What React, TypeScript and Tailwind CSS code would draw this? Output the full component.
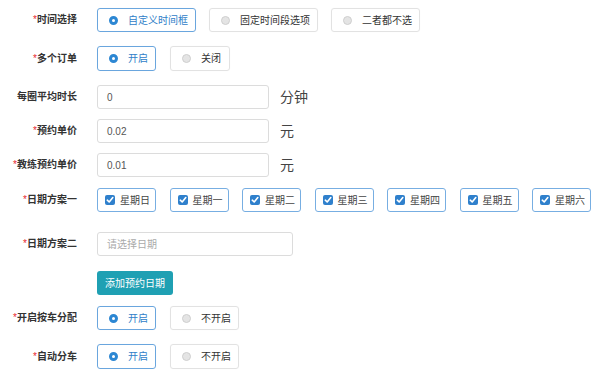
import React from "react";

const FONT = "font-['Liberation_Sans','Noto_Sans_CJK_SC',sans-serif]";

function Label({ text, req = true }: { text: string; req?: boolean }) {
  return (
    <div className="w-[77px] shrink-0 text-right text-[10px] font-bold text-[#333] leading-none whitespace-nowrap">
      {req && <span className="text-[#e8262e] font-normal">*</span>}
      {text}
    </div>
  );
}

function Radio({ label, checked, w }: { label: string; checked?: boolean; w: string }) {
  return (
    <div
      className={`${w} h-full flex items-center pl-[11px] rounded-[3px] border ${
        checked ? "border-[#6aa6de] text-[#2f80c8]" : "border-[#e2e2e2] text-[#333]"
      } text-[10px] whitespace-nowrap shadow-[0_0_1px_rgba(0,0,0,0.05)]`}
    >
      {checked ? (
        <span className="w-[9px] h-[9px] rounded-full border-[3px] border-[#2d87d3] bg-white shrink-0" />
      ) : (
        <span className="w-[9px] h-[9px] rounded-full border border-[#cfcfcf] bg-[#e4e4e4] shrink-0" />
      )}
      <span className="ml-[10px]">{label}</span>
    </div>
  );
}

function Check({ label }: { label: string }) {
  return (
    <div className="w-[59px] h-full flex items-center pl-[7px] rounded-[3px] border border-[#77aee2] text-[10px] text-[#444] whitespace-nowrap">
      <span className="w-[10px] h-[10px] rounded-[2px] bg-[#2f80cc] flex items-center justify-center shrink-0">
        <svg width="8" height="8" viewBox="0 0 8 8">
          <path d="M1.3 4.2 L3.2 6 L6.8 1.6" stroke="white" strokeWidth="1.6" fill="none" strokeLinecap="round" strokeLinejoin="round" />
        </svg>
      </span>
      <span className="ml-[5px]">{label}</span>
    </div>
  );
}

function Input({ value, placeholder, w }: { value?: string; placeholder?: string; w: string }) {
  return (
    <div className={`${w} h-full flex items-center pl-[9px] rounded-[3px] border border-[#dcdcdc] text-[10px] ${value ? "text-[#555]" : "text-[#aaa]"}`}>
      {value ?? placeholder}
    </div>
  );
}

function Row({ label, req = true, mt, h = "h-[24px]", children }: { label: string; req?: boolean; mt: string; h?: string; children: React.ReactNode }) {
  return (
    <div className={`flex items-center ${mt} ${h}`}>
      <Label text={label} req={req} />
      <div className="ml-[20px] flex items-center h-full">{children}</div>
    </div>
  );
}

export default function App() {
  return (
    <div className={`w-[602px] h-[377px] bg-white ${FONT} flex flex-col overflow-hidden`}>
      <Row label="时间选择" mt="mt-[8px]">
        <div className="flex h-full gap-[13px]">
          <Radio label="自定义时间框" checked w="w-[99px]" />
          <Radio label="固定时间段选项" w="w-[109px]" />
          <Radio label="二者都不选" w="w-[89px]" />
        </div>
      </Row>
      <Row label="多个订单" mt="mt-[14px]" h="h-[25px]">
        <div className="flex h-full gap-[14px]">
          <Radio label="开启" checked w="w-[59px]" />
          <Radio label="关闭" w="w-[60px]" />
        </div>
      </Row>
      <Row label="每圈平均时长" req={false} mt="mt-[14px]">
        <Input value="0" w="w-[172px]" />
        <span className="ml-[11px] text-[14px] text-[#444]">分钟</span>
      </Row>
      <Row label="预约单价" mt="mt-[10px]">
        <Input value="0.02" w="w-[172px]" />
        <span className="ml-[11px] text-[14px] text-[#444]">元</span>
      </Row>
      <Row label="教练预约单价" mt="mt-[10px]">
        <Input value="0.01" w="w-[172px]" />
        <span className="ml-[11px] text-[14px] text-[#444]">元</span>
      </Row>
      <Row label="日期方案一" mt="mt-[11px]">
        <div className="flex h-full gap-[13.5px]">
          {["星期日", "星期一", "星期二", "星期三", "星期四", "星期五", "星期六"].map((d) => (
            <Check key={d} label={d} />
          ))}
        </div>
      </Row>
      <Row label="日期方案二" mt="mt-[20px]">
        <Input placeholder="请选择日期" w="w-[196px]" />
      </Row>
      <div className="mt-[15px] h-[24px] flex">
        <div className="ml-[97px] w-[76px] h-full rounded-[3px] bg-[#1fa0b3] text-white text-[10px] flex items-center justify-center whitespace-nowrap">
          添加预约日期
        </div>
      </div>
      <Row label="开启按车分配" mt="mt-[11px]">
        <div className="flex h-full gap-[14px]">
          <Radio label="开启" checked w="w-[59px]" />
          <Radio label="不开启" w="w-[69px]" />
        </div>
      </Row>
      <Row label="自动分车" mt="mt-[14px]" h="h-[25px]">
        <div className="flex h-full gap-[14px]">
          <Radio label="开启" checked w="w-[59px]" />
          <Radio label="不开启" w="w-[69px]" />
        </div>
      </Row>
    </div>
  );
}
